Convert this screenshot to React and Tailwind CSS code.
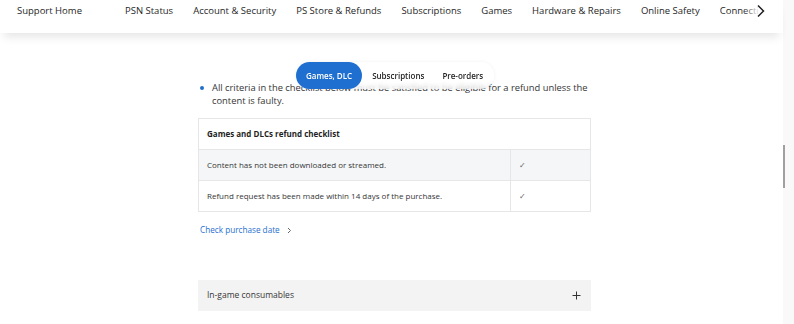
import React from 'react';

const navItems = [
  'PSN Status',
  'Account & Security',
  'PS Store & Refunds',
  'Subscriptions',
  'Games',
  'Hardware & Repairs',
  'Online Safety',
];

export default function App() {
  return (
    <div className="flex h-[324px] w-[794px] overflow-hidden bg-white font-['Open_Sans',sans-serif] text-[#1f1f1f]">
      <div className="relative flex-1">
        {/* top nav */}
        <header className="relative z-10 h-[33px] bg-white shadow-[0_8px_10px_-4px_rgba(0,0,0,0.10)]">
          <nav className="relative flex h-[22px] items-center whitespace-nowrap pl-[17px] text-[9.5px] text-[#1f1f1f]">
            <span className="mr-[43px]">Support Home</span>
            <div className="flex items-center gap-[20px]">
              {navItems.map((item) => (
                <span key={item}>{item}</span>
              ))}
              <span className="relative w-[40px] overflow-hidden">
                Connecti
                <span className="absolute inset-y-0 right-0 w-[16px] bg-gradient-to-r from-white/0 to-white" />
              </span>
            </div>
            <svg className="absolute left-[756px] top-[4px]" width="9" height="14" viewBox="0 0 9 14" fill="none">
              <path d="M2 1.5 L7.5 7 L2 12.5" stroke="#1f1f1f" strokeWidth="1.5" />
            </svg>
          </nav>
        </header>

        {/* content */}
        <main className="relative ml-[198px] w-[393px] pt-[48px]">
          <div className="absolute left-[98px] top-[29px] z-10 flex h-[27px] items-center rounded-full bg-white/70 pr-[11px] text-[8px] font-semibold backdrop-blur-[2px] shadow-[0_0_4px_rgba(0,0,0,0.06)]">
            <span className="flex h-[27px] items-center rounded-full bg-[#1f6fd0] px-[10px] text-white">Games, DLC</span>
            <span className="ml-[10px] text-[#1f1f1f]">Subscriptions</span>
            <span className="ml-[18px] text-[#1f1f1f]">Pre-orders</span>
          </div>

          <div className="flex gap-[8px] text-[9.35px] leading-[13px] text-[#363636]">
            <span className="ml-[2px] mt-[5px] h-[4px] w-[4px] shrink-0 rounded-full bg-[#1f6fd0]" />
            <p>All criteria in the checklist below must be satisfied to be eligible for a refund unless the content is faulty.</p>
          </div>

          <table className="mt-[11px] w-full border-collapse text-[8px] text-[#363636]">
            <thead>
              <tr>
                <th colSpan={2} className="h-[31px] border border-[#e6e6e6] pl-[8px] text-left font-bold text-[#1f1f1f]">
                  Games and DLCs refund checklist
                </th>
              </tr>
            </thead>
            <tbody>
              <tr className="bg-[#f5f6f8]">
                <td className="h-[31px] border border-[#e6e6e6] pl-[8px]">Content has not been downloaded or streamed.</td>
                <td className="w-[80px] border border-[#e6e6e6] pl-[8px] text-[#666]">✓</td>
              </tr>
              <tr>
                <td className="h-[31px] border border-[#e6e6e6] pl-[8px]">Refund request has been made within 14 days of the purchase.</td>
                <td className="w-[80px] border border-[#e6e6e6] pl-[8px] text-[#666]">✓</td>
              </tr>
            </tbody>
          </table>

          <a className="mt-[12px] flex items-center gap-[7px] pl-[2px] text-[8.2px] text-[#1f6fd0]">
            Check purchase date
            <svg width="5" height="7" viewBox="0 0 5 7" fill="none">
              <path d="M1 1 L3.5 3.5 L1 6" stroke="#555" strokeWidth="0.9" />
            </svg>
          </a>

          <div className="mt-[44px] flex h-[31px] items-center justify-between bg-[#f3f3f3] px-[9px] text-[8.5px] text-[#363636]">
            <span>In-game consumables</span>
            <svg width="9" height="9" viewBox="0 0 9 9" className="mr-[1px]">
              <path d="M4.5 0.5 V8.5 M0.5 4.5 H8.5" stroke="#333" strokeWidth="1" />
            </svg>
          </div>
        </main>
      </div>

      {/* scrollbar */}
      <aside className="w-[11px] shrink-0 bg-[#f9f9f9] pt-[145px]">
        <div className="h-[43px] w-[2px] bg-[#a0a0a0]" />
      </aside>
    </div>
  );
}
